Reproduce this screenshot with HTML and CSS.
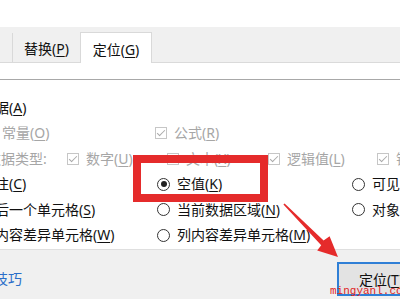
FILE: index.html
```html
<!DOCTYPE html>
<html lang="zh-CN">
<head>
    <meta charset="UTF-8">
    <meta name="viewport" content="width=device-width, initial-scale=1.0">
    <title>定位</title>
    <link rel="stylesheet" href="styles.css">
</head>
<body>
    <div class="dialog">
        <div class="top-space"></div>
        <div class="tab-strip">
            <div class="tab"><span>替换(<u>P</u>)</span></div>
            <div class="tab active"><span>定位(<u>G</u>)</span></div>
        </div>
        <div class="page">
            <div class="group">
                <div class="row">
                    <label class="opt col-a"><span class="radio"></span><span>数据(<u>A</u>)</span></label>
                </div>
                <div class="row disabled">
                    <label class="opt sub"><span class="check"></span><span>常量(<u>O</u>)</span></label>
                    <label class="opt"><span class="check"></span><span>公式(<u>R</u>)</span></label>
                </div>
                <div class="row disabled">
                    <span class="type-label">数据类型:</span>
                    <label class="opt w100"><span class="check"></span><span>数字(<u>U</u>)</span></label>
                    <label class="opt w101"><span class="check"></span><span>文本(<u>X</u>)</span></label>
                    <label class="opt w109"><span class="check"></span><span>逻辑值(<u>L</u>)</span></label>
                    <label class="opt"><span class="check"></span><span>错误(<u>E</u>)</span></label>
                </div>
                <div class="row">
                    <label class="opt col-a"><span class="radio"></span><span>批注(<u>C</u>)</span></label>
                    <label class="opt col-b"><span class="radio on"></span><span>空值(<u>K</u>)</span></label>
                    <label class="opt"><span class="radio"></span><span>可见单元格(<u>Y</u>)</span></label>
                </div>
                <div class="row">
                    <label class="opt col-a"><span class="radio"></span><span>最后一个单元格(<u>S</u>)</span></label>
                    <label class="opt col-b"><span class="radio"></span><span>当前数据区域(<u>N</u>)</span></label>
                    <label class="opt"><span class="radio"></span><span>对象(<u>B</u>)</span></label>
                </div>
                <div class="row">
                    <label class="opt col-a"><span class="radio"></span><span>行内容差异单元格(<u>W</u>)</span></label>
                    <label class="opt col-b"><span class="radio"></span><span>列内容差异单元格(<u>M</u>)</span></label>
                </div>
            </div>
        </div>
        <div class="footer">
            <a class="tip-link" href="#">操作技巧</a>
            <button class="btn">定位(<u>T</u>)</button>
        </div>
    </div>

    <!-- 标注：红框 + 箭头 + 水印 -->
    <div class="highlight"></div>
    <svg class="arrow" width="400" height="300" viewBox="0 0 400 300">
        <polygon points="284.6,203.4 323.6,240.6 329.6,236.2 338,257 317.2,250.6 321.2,245.2 283.4,204.6" fill="#e52b2b"/>
    </svg>
    <div class="watermark">mingyanl.com</div>
</body>
</html>
```

FILE: styles.css
```css
body {
    margin: 0;
    width: 400px;
    height: 300px;
    overflow: hidden;
    position: relative;
    background: #fff;
    font-family: "Noto Sans", "Noto Sans CJK SC", sans-serif;
    font-size: 14px;
    line-height: 20px;
    color: #111;
}
u {
    text-decoration-thickness: 1px;
    text-underline-offset: 2px;
}
.dialog {
    width: 400px;
    height: 300px;
}
.top-space {
    height: 27px;
}
.tab-strip {
    height: 35px;
    background: #f0f0f0;
    border-bottom: 1px solid #dadada;
    display: flex;
    align-items: flex-end;
    padding-left: 12px;
}
.tab {
    width: 68px;
    height: 29px;
    box-sizing: border-box;
    border-left: 1px solid #d9d9d9;
    display: flex;
    align-items: center;
    justify-content: center;
    padding-top: 2px;
}
.tab.active {
    width: 72px;
    height: 31px;
    margin-bottom: -1px;
    background: #fff;
    border: 1px solid #d9d9d9;
    border-bottom: none;
    padding-top: 3px;
}
.page {
    height: 186px;
    box-sizing: border-box;
    padding-top: 16px;
}
.group {
    border-top: 1px solid #a8a8a8;
    padding-top: 15px;
    margin-left: -39px;
}
.row {
    display: flex;
    align-items: center;
    height: 25.5px;
    white-space: nowrap;
}
.opt {
    display: flex;
    align-items: center;
    gap: 7px;
    flex-shrink: 0;
}
.col-a {
    width: 196px;
}
.col-b {
    width: 195px;
}
.sub {
    width: 194px;
    padding-left: 22px;
    box-sizing: border-box;
}
.type-label {
    width: 106px;
    padding-left: 26px;
    box-sizing: border-box;
    flex-shrink: 0;
}
.w100 { width: 100px; }
.w101 { width: 101px; }
.w109 { width: 109px; }
.disabled {
    color: #a6a6a6;
}
.radio {
    width: 13px;
    height: 13px;
    box-sizing: border-box;
    border: 1.5px solid #333;
    border-radius: 50%;
    display: flex;
    align-items: center;
    justify-content: center;
    flex-shrink: 0;
}
.radio.on::after {
    content: "";
    width: 6px;
    height: 6px;
    border-radius: 50%;
    background: #222;
}
.check {
    width: 12px;
    height: 12px;
    box-sizing: border-box;
    border: 1px solid #c6c6c6;
    position: relative;
    flex-shrink: 0;
}
.check::after {
    content: "";
    position: absolute;
    left: 3px;
    top: 0;
    width: 3px;
    height: 7px;
    border: solid #a9a9a9;
    border-width: 0 1.5px 1.5px 0;
    transform: rotate(45deg);
}
.footer {
    height: 50px;
    box-sizing: border-box;
    border-top: 1px solid #dfdfdf;
    background: #f0f0f0;
    display: flex;
    align-items: flex-start;
    padding-top: 12px;
}
.tip-link {
    margin-left: -34px;
    margin-top: 7px;
    color: #2b6fc9;
    text-decoration: none;
}
.btn {
    margin-left: auto;
    margin-right: -25px;
    width: 88px;
    height: 34px;
    box-sizing: border-box;
    border: 2px solid #2f7fd6;
    background: #e3e3e3;
    font-family: inherit;
    font-size: 14px;
    color: #111;
    padding: 0;
}
.highlight {
    position: absolute;
    left: 133px;
    top: 155px;
    width: 135px;
    height: 47px;
    box-sizing: border-box;
    border: 8px solid #e52b2b;
}
.arrow {
    position: absolute;
    left: 0;
    top: 0;
    pointer-events: none;
}
.watermark {
    position: absolute;
    left: 330px;
    top: 285px;
    font-family: "Liberation Mono", monospace;
    font-size: 11px;
    line-height: 13px;
    color: #e02424;
}
```
